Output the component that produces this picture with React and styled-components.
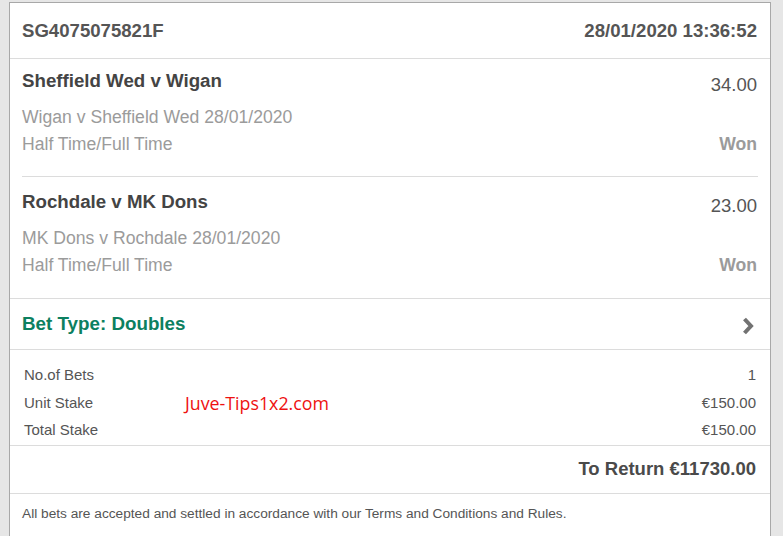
import React from "react";
import styled, { createGlobalStyle } from "styled-components";

const GlobalStyle = createGlobalStyle`
  body {
    margin: 0;
    background: #e6e6e6;
    font-family: "Liberation Sans", Arial, sans-serif;
  }
`;

const Page = styled.div`
  padding: 2px 12px 0 9px;
  height: 534px;
  overflow: hidden;
`;

const Card = styled.div`
  background: #fff;
  border: 1px solid #a8a8a8;
  border-bottom: none;
  min-height: 560px;
`;

const Header = styled.div`
  display: flex;
  justify-content: space-between;
  align-items: center;
  height: 55px;
  padding: 0 13px 0 12px;
  border-bottom: 1px solid #dcdcdc;
  font-size: 18.6px;
  font-weight: bold;
  color: #555;
`;

const Selection = styled.div`
  padding: 10px 13px ${p => (p.$last ? "19px" : "18px")} 12px;
`;

const Divider = styled.div`
  border-top: 1px solid #dcdcdc;
  margin: 0 12px 3px;
`;

const Row = styled.div`
  display: flex;
  justify-content: space-between;
  align-items: flex-start;
`;

const Title = styled.div`
  font-size: 18.7px;
  line-height: 24px;
  font-weight: bold;
  color: #444;
  margin-bottom: 11px;
`;

const Odds = styled.div`
  font-size: 18.5px;
  line-height: 24px;
  color: #555;
  margin-top: 4px;
`;

const Sub = styled.div`
  font-size: 17.6px;
  line-height: 27px;
  color: #9b9b9b;
  font-weight: ${p => (p.$bold ? "bold" : "normal")};
`;

const BetType = styled.div`
  display: flex;
  justify-content: space-between;
  align-items: center;
  height: 50px;
  padding: 0 15px 0 12px;
  border-top: 1px solid #dcdcdc;
  border-bottom: 1px solid #dcdcdc;
  font-size: 18.8px;
  font-weight: bold;
  color: #0c8060;
`;

const Stakes = styled.div`
  position: relative;
  padding: 11px 14px 1px;
  border-bottom: 1px solid #dcdcdc;
`;

const StakeRow = styled.div`
  display: flex;
  justify-content: space-between;
  font-size: 15px;
  line-height: 27.5px;
  color: #555;
`;

const Watermark = styled.div`
  position: absolute;
  left: 175px;
  top: 40px;
  font-family: "Open Sans", "Noto Sans", sans-serif;
  font-size: 17.8px;
  line-height: 26px;
  color: #ee1111;
`;

const Return = styled.div`
  display: flex;
  justify-content: flex-end;
  align-items: center;
  height: 47px;
  padding: 0 14px;
  border-bottom: 1px solid #dcdcdc;
  font-size: 18.5px;
  font-weight: bold;
  color: #4a4a4a;
`;

const Footer = styled.div`
  padding: 10px 12px;
  font-size: 13.7px;
  line-height: 20px;
  color: #555;
`;

const ChevronIcon = styled.svg`
  margin-top: 4px;
`;

const selections = [
  {
    title: "Sheffield Wed v Wigan",
    odds: "34.00",
    event: "Wigan v Sheffield Wed 28/01/2020",
  },
  {
    title: "Rochdale v MK Dons",
    odds: "23.00",
    event: "MK Dons v Rochdale 28/01/2020",
  },
];

const stakes = [
  { label: "No.of Bets", value: "1" },
  { label: "Unit Stake", value: "€150.00" },
  { label: "Total Stake", value: "€150.00" },
];

function Chevron() {
  return (
    <ChevronIcon width="14" height="20" viewBox="0 0 14 20">
      <polyline
        points="3.5,3 10,10 3.5,17"
        fill="none"
        stroke="#727272"
        strokeWidth="4"
      />
    </ChevronIcon>
  );
}

export default function App() {
  return (
    <>
      <GlobalStyle />
      <Page>
        <Card>
          <Header>
            <span>SG4075075821F</span>
            <span>28/01/2020 13:36:52</span>
          </Header>
          {selections.map((s, i) => (
            <React.Fragment key={i}>
              {i > 0 && <Divider />}
              <Selection $last={i === selections.length - 1}>
                <Row>
                  <Title>{s.title}</Title>
                  <Odds>{s.odds}</Odds>
                </Row>
                <Sub>{s.event}</Sub>
                <Row>
                  <Sub>Half Time/Full Time</Sub>
                  <Sub $bold>Won</Sub>
                </Row>
              </Selection>
            </React.Fragment>
          ))}
          <BetType>
            <span>Bet Type: Doubles</span>
            <Chevron />
          </BetType>
          <Stakes>
            {stakes.map((r, i) => (
              <StakeRow key={i}>
                <span>{r.label}</span>
                <span>{r.value}</span>
              </StakeRow>
            ))}
            <Watermark>Juve-Tips1x2.com</Watermark>
          </Stakes>
          <Return>To Return €11730.00</Return>
          <Footer>
            All bets are accepted and settled in accordance with our Terms and
            Conditions and Rules.
          </Footer>
        </Card>
      </Page>
    </>
  );
}
